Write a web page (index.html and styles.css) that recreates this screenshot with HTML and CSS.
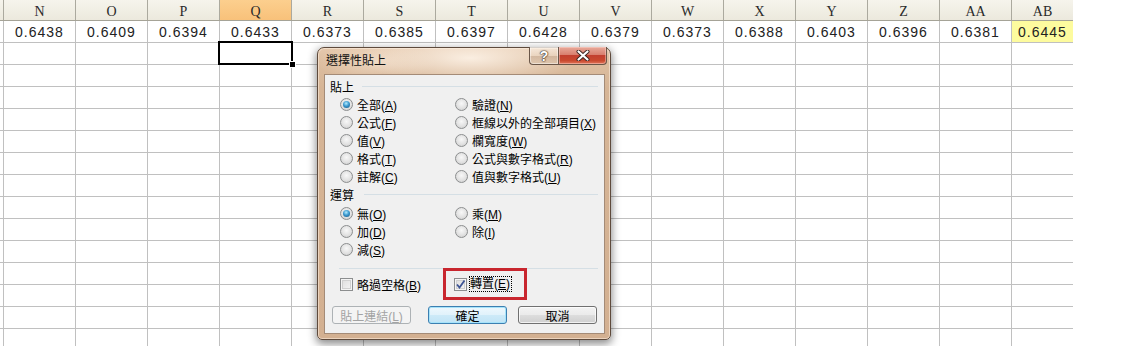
FILE: index.html
```html
<!DOCTYPE html>
<html lang="zh-Hant">
<head>
<meta charset="utf-8">
<title>選擇性貼上</title>
<link rel="stylesheet" href="styles.css">
</head>
<body>
<div class="sheet">
  <div class="hdr">
    <div class="c m"></div>
    <div class="c">N</div><div class="c">O</div><div class="c">P</div><div class="c sel">Q</div>
    <div class="c">R</div><div class="c">S</div><div class="c">T</div><div class="c">U</div>
    <div class="c">V</div><div class="c">W</div><div class="c">X</div><div class="c">Y</div>
    <div class="c">Z</div><div class="c">AA</div><div class="c ab">AB</div>
  </div>
  <div class="r1">
    <div class="c m"></div>
    <div class="c">0.6438</div><div class="c">0.6409</div><div class="c">0.6394</div><div class="c">0.6433</div>
    <div class="c">0.6373</div><div class="c">0.6385</div><div class="c">0.6397</div><div class="c">0.6428</div>
    <div class="c">0.6379</div><div class="c">0.6373</div><div class="c">0.6388</div><div class="c">0.6403</div>
    <div class="c">0.6396</div><div class="c">0.6381</div><div class="c ab hl">0.6445</div>
  </div>
  <div class="empty"></div>
</div>

<div class="selection"><span class="handle"></span></div>

<div class="dialog">
  <div class="titlebar">
    <span class="title">選擇性貼上</span>
    <div class="tbtns">
      <span class="tb help">?</span>
      <span class="tb close"><svg width="14" height="11" viewBox="0 0 14 11"><path d="M2.5 1.5 L11.5 9.5 M11.5 1.5 L2.5 9.5" stroke="#3a2420" stroke-width="4" stroke-linecap="round"/><path d="M2.5 1.5 L11.5 9.5 M11.5 1.5 L2.5 9.5" stroke="#fff" stroke-width="2.2" stroke-linecap="round"/></svg></span>
    </div>
  </div>
  <div class="panel">
    <div class="group"><span>貼上</span><span class="sep"></span></div>
    <div class="opts">
      <label class="opt"><span class="radio on"></span><span>全部(<u>A</u>)</span></label>
      <label class="opt"><span class="radio"></span><span>驗證(<u>N</u>)</span></label>
      <label class="opt"><span class="radio"></span><span>公式(<u>F</u>)</span></label>
      <label class="opt"><span class="radio"></span><span>框線以外的全部項目(<u>X</u>)</span></label>
      <label class="opt"><span class="radio"></span><span>值(<u>V</u>)</span></label>
      <label class="opt"><span class="radio"></span><span>欄寬度(<u>W</u>)</span></label>
      <label class="opt"><span class="radio"></span><span>格式(<u>T</u>)</span></label>
      <label class="opt"><span class="radio"></span><span>公式與數字格式(<u>R</u>)</span></label>
      <label class="opt"><span class="radio"></span><span>註解(<u>C</u>)</span></label>
      <label class="opt"><span class="radio"></span><span>值與數字格式(<u>U</u>)</span></label>
    </div>
    <div class="group g2"><span>運算</span><span class="sep"></span></div>
    <div class="opts o2">
      <label class="opt"><span class="radio on"></span><span>無(<u>O</u>)</span></label>
      <label class="opt"><span class="radio"></span><span>乘(<u>M</u>)</span></label>
      <label class="opt"><span class="radio"></span><span>加(<u>D</u>)</span></label>
      <label class="opt"><span class="radio"></span><span>除(<u>I</u>)</span></label>
      <label class="opt"><span class="radio"></span><span>減(<u>S</u>)</span></label>
    </div>
    <div class="line"></div>
    <div class="checks">
      <label class="chk"><span class="box"></span><span>略過空格(<u>B</u>)</span></label>
      <label class="chk c2"><span class="box"><svg width="11" height="11" viewBox="0 0 11 11"><path d="M2 5.5 L4.5 8.5 L9.5 1.5" fill="none" stroke="#3d5494" stroke-width="1.8"/></svg></span><span class="focus">轉置(<u>E</u>)</span><span class="mark"></span></label>
    </div>
    <div class="buttons">
      <span class="btn disabled"><span>貼上連結(<u>L</u>)</span></span>
      <span class="btn default">確定</span>
      <span class="btn cancel">取消</span>
    </div>
  </div>
</div>
</body>
</html>
```

FILE: styles.css
```css
html, body {
  margin: 0;
  padding: 0;
}
body {
  width: 1125px;
  height: 346px;
  overflow: hidden;
  position: relative;
  background: #fff;
  font-family: "Liberation Sans", "Noto Sans CJK TC", sans-serif;
}

/* ---------- spreadsheet ---------- */
.sheet {
  width: 1073px;
}
.c {
  flex: none;
  width: 72px;
  box-sizing: border-box;
  border-right: 1px solid #c0c0c0;
  display: flex;
  align-items: center;
  justify-content: center;
}
.c.m { width: 4px; }
.c.ab { width: 61px; border-right: none; }

.hdr {
  display: flex;
  height: 21px;
  box-sizing: border-box;
  background: linear-gradient(#f6f4ec, #ece9dd);
  border-bottom: 1px solid #a5a397;
  font-family: "Liberation Serif", serif;
  font-size: 14px;
  color: #2a2a2a;
}
.hdr .c {
  border-right-color: #aba99e;
  padding-top: 3px;
}
.hdr .c.ab { border-right: none; }
.hdr .c.sel {
  background: linear-gradient(#fccf8e, #f8c17a);
}

.r1 {
  display: flex;
  height: 22px;
  box-sizing: border-box;
  border-bottom: 1px solid #c0c0c0;
  font-family: "Liberation Sans", sans-serif;
  font-size: 14px;
  letter-spacing: 1px;
  color: #222;
}
.r1 .c.hl {
  background: #fdfb9e;
}

.empty {
  height: 303px;
  background-image:
    linear-gradient(to right, #c0c0c0 1px, transparent 1px),
    linear-gradient(to bottom, transparent 21px, #c0c0c0 21px);
  background-size: 72px 100%, 100% 22px;
  background-position: 3px 0, 0 0;
  background-repeat: repeat-x, repeat-y;
}

.selection {
  position: absolute;
  left: 218px;
  top: 41px;
  width: 75px;
  height: 24px;
  box-sizing: border-box;
  border: 2px solid #000;
}
.handle {
  position: absolute;
  right: -5px;
  bottom: -5px;
  width: 5px;
  height: 5px;
  background: #000;
  border: 1px solid #fff;
}

/* ---------- dialog ---------- */
.dialog {
  position: absolute;
  left: 317px;
  top: 47px;
  width: 294px;
  height: 293px;
  box-sizing: border-box;
  border: 1px solid #5e4a3c;
  border-radius: 7px 7px 5px 5px;
  background:
    radial-gradient(ellipse 110px 26px at 52% 10px, rgba(255, 246, 236, 0.85), rgba(255, 246, 236, 0) 100%),
    radial-gradient(ellipse 60px 18px at 20% 14px, rgba(255, 240, 225, 0.5), rgba(255, 240, 225, 0) 100%),
    linear-gradient(#e5c9ae 0, #dcbd9f 14px, #d6b596 40px, #d3b091 100%);
  box-shadow: inset 0 0 0 1px rgba(255, 240, 225, 0.55), 0 3px 9px 1px rgba(0, 0, 0, 0.45);
  display: flex;
  flex-direction: column;
  font-size: 12px;
  color: #000;
}

.titlebar {
  flex: none;
  height: 26px;
  display: flex;
  align-items: flex-start;
}
.title {
  padding-left: 8px;
  line-height: 26px;
  font-size: 12px;
  color: #111;
}
.tbtns {
  margin-left: auto;
  margin-right: 3px;
  margin-top: -1px;
  display: flex;
}
.tb {
  height: 18px;
  box-sizing: border-box;
  border: 1px solid #6a5648;
  border-top: none;
  display: flex;
  align-items: center;
  justify-content: center;
}
.help {
  width: 29px;
  border-radius: 0 0 0 4px;
  border-right: none;
  background: linear-gradient(rgba(255, 250, 244, 0.55), rgba(235, 215, 195, 0.5) 50%, rgba(190, 160, 135, 0.55) 51%, rgba(220, 195, 170, 0.6));
  box-shadow: inset 0 0 0 1px rgba(255, 255, 255, 0.45);
  font-family: "Liberation Sans", sans-serif;
  font-weight: bold;
  font-size: 14px;
  color: #fff;
  text-shadow: 0 0 1px #3b2b22, 0 0 1px #3b2b22, 0 0 2px #3b2b22;
}
.close {
  width: 49px;
  border-radius: 0 0 4px 0;
  background: linear-gradient(#e8a99a 0, #d9806f 45%, #c2402f 50%, #c9492f 80%, #e0765a 100%);
  box-shadow: inset 0 0 0 1px rgba(255, 220, 210, 0.45);
}
.close svg { display: block; }

.panel {
  flex: 1;
  margin: 0 5px 5px 6px;
  box-sizing: border-box;
  border: 1px solid #a48b77;
  background: #f0f0f0;
  padding: 3px 6px 0 5px;
  display: flex;
  flex-direction: column;
}

.group {
  height: 17px;
  display: flex;
  align-items: center;
}
.group .sep {
  flex: 1;
  height: 1px;
  margin-left: 8px;
  background: #d5dfe5;
}
.group.g2 {
  margin-top: 1px;
}
.group.g2 .sep { margin-left: 10px; }

.opts {
  display: grid;
  grid-template-columns: 115px auto;
  grid-auto-rows: 18px;
  padding-left: 10px;
}
.opts.o2 { margin-top: 1px; }
.opt, .chk {
  display: flex;
  align-items: center;
  gap: 4px;
  white-space: nowrap;
}
u { text-decoration: underline; text-underline-offset: 1px; }

.radio {
  flex: none;
  width: 13px;
  height: 13px;
  box-sizing: border-box;
  border-radius: 50%;
  border: 1px solid #8c8e8f;
  background: radial-gradient(circle at 50% 40%, #f8f8f8 0, #e2e2e2 55%, #c9c9c9 100%);
  display: flex;
  align-items: center;
  justify-content: center;
}
.radio.on::after {
  content: "";
  width: 7px;
  height: 7px;
  border-radius: 50%;
  background: radial-gradient(circle at 45% 35%, #b4ecff 0, #3c9ad0 45%, #13507d 100%);
}

.line {
  height: 1px;
  margin: 10px 0 0 9px;
  background: #d5dfe5;
}

.checks {
  margin-top: 7px;
  height: 16px;
  display: flex;
  padding-left: 10px;
}
.chk { width: 114px; position: relative; }
.chk.c2 { gap: 2px; width: auto; }
.box {
  flex: none;
  width: 13px;
  height: 13px;
  box-sizing: border-box;
  border: 1px solid #8c8e8f;
  background: linear-gradient(135deg, #dcdcdc, #f6f6f6);
  box-shadow: inset 0 0 0 1px #f4f4f4, inset 0 0 0 2px #d0d0d0;
  display: flex;
  align-items: center;
  justify-content: center;
}
.box svg { display: block; }
.focus {
  border: 1px dotted #000;
  height: 16px;
  box-sizing: border-box;
  line-height: 14px;
  padding-right: 1px;
}
.mark {
  position: absolute;
  left: -11px;
  top: -8px;
  width: 84px;
  height: 32px;
  box-sizing: border-box;
  border: 3px solid #c8262e;
}

.buttons {
  margin-top: 14px;
  display: flex;
  padding-left: 2px;
}
.btn {
  width: 79px;
  height: 18px;
  box-sizing: border-box;
  border: 1px solid #707070;
  border-radius: 3px;
  background: linear-gradient(#f3f3f3 0, #ebebeb 48%, #dddddd 52%, #cfcfcf 100%);
  box-shadow: inset 0 0 0 1px rgba(255, 255, 255, 0.7);
  display: flex;
  align-items: center;
  justify-content: center;
  font-size: 12px;
}
.btn.disabled {
  border-color: #adb2b5;
  background: #f4f4f4;
  box-shadow: none;
  color: #a3a3a3;
}
.btn.default {
  margin-left: 17px;
  border-color: #3c7fb1;
  background: linear-gradient(#eef8fd 0, #e1f2fb 48%, #cdeaf8 52%, #c1e4f6 100%);
  box-shadow: inset 0 0 0 1px #a6e3fa;
}
.btn.cancel {
  margin-left: 11px;
}
```
